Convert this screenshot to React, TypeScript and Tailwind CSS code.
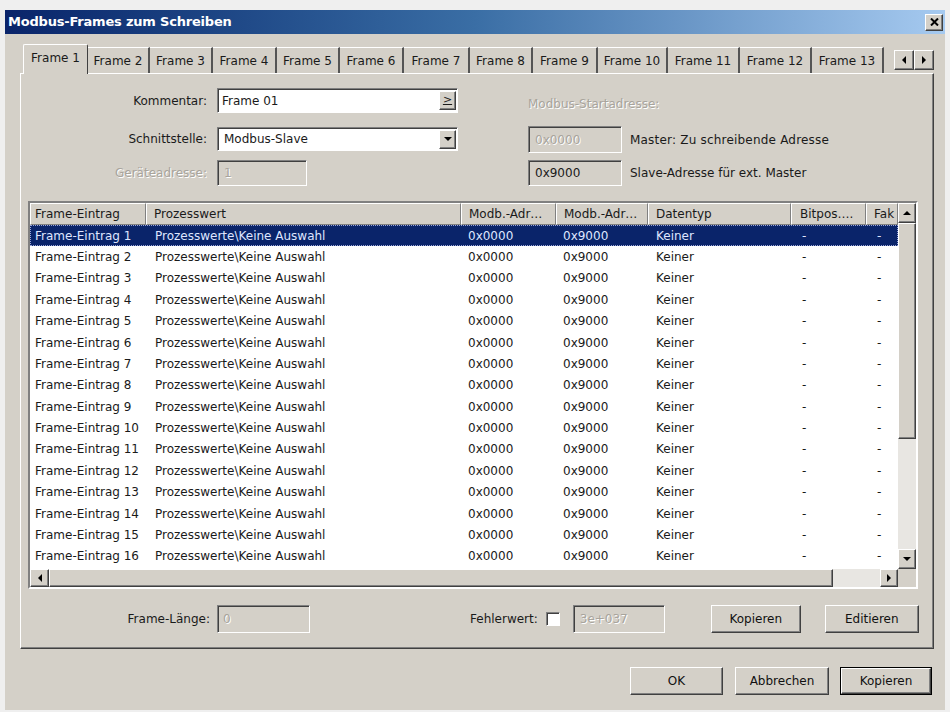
import React from "react";

const sunken =
  "border border-t-[#808080] border-l-[#808080] border-b-white border-r-white shadow-[inset_1px_1px_0_#404040]";
const raised =
  "border border-t-white border-l-white border-b-[#404040] border-r-[#404040] shadow-[inset_-1px_-1px_0_#808080]";
const disabledText = "text-[#a8a49c] [text-shadow:1px_1px_0_#ffffff]";

const tabs = [
  ["Frame 1", 65],
  ["Frame 2", 62],
  ["Frame 3", 63],
  ["Frame 4", 64],
  ["Frame 5", 63],
  ["Frame 6", 64],
  ["Frame 7", 66],
  ["Frame 8", 63],
  ["Frame 9", 65],
  ["Frame 10", 70],
  ["Frame 11", 72],
  ["Frame 12", 72],
  ["Frame 13", 72],
] as const;

const cols = [116, 315, 95, 92, 143, 75, 32];

function Tri({ dir }: { dir: "up" | "down" | "left" | "right" }) {
  const pts =
    dir === "up"
      ? "0,5 4,1 8,5"
      : dir === "down"
      ? "0,1 8,1 4,5"
      : dir === "left"
      ? "5,0 5,8 1,4"
      : "1,0 1,8 5,4";
  const w = dir === "up" || dir === "down" ? 8 : 6;
  const h = dir === "up" || dir === "down" ? 6 : 8;
  return (
    <svg width={w} height={h} viewBox={`0 0 ${w} ${h}`}>
      <polygon points={pts} fill="#000" />
    </svg>
  );
}

function ArrowBtn({ dir, className = "" }: { dir: "up" | "down" | "left" | "right"; className?: string }) {
  return (
    <div className={`${raised} bg-[#d4d0c8] flex items-center justify-center ${className}`}>
      <Tri dir={dir} />
    </div>
  );
}

function Button({ label, w, isDefault = false }: { label: string; w: number; isDefault?: boolean }) {
  const inner = (
    <div
      className={`${raised} bg-[#d4d0c8] h-full flex items-center justify-center text-[#111]`}
    >
      {label}
    </div>
  );
  return (
    <div style={{ width: w }} className={`h-[28px] ${isDefault ? "border border-black" : ""}`}>
      {inner}
    </div>
  );
}

export default function App() {
  const rows = Array.from({ length: 16 }, (_, i) => i + 1);
  return (
    <div className="w-[950px] h-[712px] bg-[#efefef] pt-[10px] pl-[5px] pr-[5px] pb-[2px] font-['DejaVu_Sans',sans-serif] text-[12px] text-[#1a1a1a] overflow-hidden">
      <div className="h-[700px] bg-[#d4d0c8] flex flex-col">
        {/* Title bar */}
        <div className="h-[24px] flex items-center justify-between pl-[3px] pr-[2px] bg-gradient-to-r from-[#0a246a] via-[#3a6ea5] to-[#a6caf0]">
          <span className="text-white font-bold text-[13px] tracking-[-0.2px]">Modbus-Frames zum Schreiben</span>
          <div className={`${raised} bg-[#d4d0c8] w-[18px] h-[17px] flex items-center justify-center`}>
            <svg width="9" height="8" viewBox="0 0 9 8">
              <path d="M1 0.5 L8 7.5 M8 0.5 L1 7.5" stroke="#000" strokeWidth="2" />
            </svg>
          </div>
        </div>

        <div className="pl-[15px] pr-[11px] pt-[10px] flex flex-col">
          {/* Tab row */}
          <div className="h-[29px] flex items-end relative z-10">
            <div className="flex items-end ml-[3px]">
              {tabs.map(([label, w], i) => {
                const active = i === 0;
                return (
                  <div
                    key={label}
                    style={{ width: w }}
                    className={
                      active
                        ? "h-[30px] -mb-[1px] bg-[#d4d0c8] border-l border-t border-l-white border-t-white border-r border-r-[#404040] rounded-t-[2px] flex items-center justify-center pb-[3px]"
                        : "h-[26px] border-t border-t-white border-r-2 border-r-[#555] flex items-center justify-center"
                    }
                  >
                    {label}
                  </div>
                );
              })}
            </div>
            <div className="ml-auto flex mb-[3px]">
              <ArrowBtn dir="left" className="w-[20px] h-[20px]" />
              <ArrowBtn dir="right" className="w-[20px] h-[20px]" />
            </div>
          </div>

          {/* Tab panel */}
          <div className="h-[576px] border border-t-white border-l-white border-b-[#404040] border-r-[#404040] shadow-[inset_-1px_-1px_0_#808080] flex flex-col">
            {/* Form area */}
            <div className="flex">
              <div className="w-[438px] flex flex-col">
                <div className="mt-[14px] flex items-center h-[25px]">
                  <div className="w-[186px] text-right">Kommentar:</div>
                  <div className={`ml-[10px] w-[241px] h-[25px] bg-white ${sunken} flex items-center justify-between pl-[4px] pr-[1px]`}>
                    <span>Frame 01</span>
                    <div className={`${raised} bg-[#d4d0c8] w-[17px] h-[19px] flex items-center justify-center text-[11px] underline`}>
                      &gt;
                    </div>
                  </div>
                </div>
                <div className="mt-[14px] flex items-center h-[24px]">
                  <div className="w-[186px] text-right">Schnittstelle:</div>
                  <div className={`ml-[10px] w-[241px] h-[24px] bg-white ${sunken} flex items-center justify-between pl-[6px] pr-[1px]`}>
                    <span>Modbus-Slave</span>
                    <ArrowBtn dir="down" className="w-[17px] h-[19px]" />
                  </div>
                </div>
                <div className="mt-[9px] flex items-center h-[26px]">
                  <div className={`w-[186px] text-right ${disabledText}`}>Geräteadresse:</div>
                  <div className={`ml-[10px] w-[90px] h-[26px] ${sunken} flex items-center pl-[6px] ${disabledText}`}>
                    1
                  </div>
                </div>
              </div>
              <div className="ml-[69px] flex flex-col">
                <div className={`mt-[23px] h-[14px] leading-[14px] ${disabledText}`}>Modbus-Startadresse:</div>
                <div className="mt-[15px] flex items-center">
                  <div className={`w-[94px] h-[27px] ${sunken} flex items-center pl-[6px] ${disabledText}`}>0x0000</div>
                  <span className="ml-[8px] tracking-[0.2px]">Master: Zu schreibende Adresse</span>
                </div>
                <div className="mt-[7px] flex items-center">
                  <div className={`w-[94px] h-[26px] ${sunken} flex items-center pl-[6px]`}>0x9000</div>
                  <span className="ml-[8px]">Slave-Adresse für ext. Master</span>
                </div>
              </div>
            </div>

            {/* Table */}
            <div className="mt-[15px] ml-[7px] w-[890px] h-[388px] border-2 border-t-[#808080] border-l-[#808080] border-b-white border-r-white bg-white flex flex-col">
              <div className="flex flex-1 min-h-0">
                <div className="flex flex-col w-[868px]">
                  {/* Header */}
                  <div className="flex h-[22px] bg-[#d4d0c8]">
                    {["Frame-Eintrag", "Prozesswert", "Modb.-Adr…", "Modb.-Adr…", "Datentyp", "Bitpos….", "Fak"].map((h, i) => (
                      <div
                        key={i}
                        style={{ width: cols[i] }}
                        className={`h-full border-t border-l border-t-white border-l-white border-r border-b border-r-[#808080] border-b-[#808080] flex items-center overflow-hidden whitespace-nowrap ${
                          i === 0 ? "pl-[4px]" : i === 5 ? "pl-[8px]" : "pl-[7px]"
                        }`}
                      >
                        {h}
                      </div>
                    ))}
                  </div>
                  {/* Rows */}
                  <div className="flex flex-col">
                    {rows.map((n) => {
                      const sel = n === 1;
                      return (
                        <div
                          key={n}
                          className={`flex h-[21.375px] items-center whitespace-nowrap ${
                            sel ? "bg-[#0a246a] text-[#dfe6ff] outline outline-1 outline-dotted outline-[#9aa6d8] -outline-offset-1" : ""
                          }`}
                        >
                          <div style={{ width: cols[0] }} className="pl-[5px]">Frame-Eintrag {n}</div>
                          <div style={{ width: cols[1] }} className="pl-[9px]">Prozesswerte\Keine Auswahl</div>
                          <div style={{ width: cols[2] }} className="pl-[7px]">0x0000</div>
                          <div style={{ width: cols[3] }} className="pl-[7px]">0x9000</div>
                          <div style={{ width: cols[4] }} className="pl-[8px]">Keiner</div>
                          <div style={{ width: cols[5] }} className="pl-[11px]">-</div>
                          <div style={{ width: cols[6] }} className="pl-[11px]">-</div>
                        </div>
                      );
                    })}
                  </div>
                </div>
                {/* Vertical scrollbar */}
                <div className="w-[18px] flex flex-col bg-[#e8e6e2]">
                  <ArrowBtn dir="up" className="h-[20px]" />
                  <div className={`${raised} bg-[#d4d0c8] h-[216px]`} />
                  <div className="flex-1" />
                  <ArrowBtn dir="down" className="h-[20px]" />
                </div>
              </div>
              {/* Horizontal scrollbar */}
              <div className="h-[18px] flex bg-[#d4d0c8]">
                <div className="w-[868px] flex bg-[#e8e6e2]">
                  <ArrowBtn dir="left" className="w-[19px] h-full" />
                  <div className={`${raised} bg-[#d4d0c8] w-[784px] h-full`} />
                  <div className="flex-1" />
                  <ArrowBtn dir="right" className="w-[18px] h-full" />
                </div>
                <div className="flex-1 bg-[#d4d0c8]" />
              </div>
            </div>

            {/* Bottom row in panel */}
            <div className="mt-[15px] flex items-center h-[29px]">
              <div className="w-[189px] text-right">Frame-Länge:</div>
              <div className={`ml-[7px] w-[93px] h-[28px] ${sunken} flex items-center pl-[5px] ${disabledText}`}>0</div>
              <div className="ml-[160px]">Fehlerwert:</div>
              <div className={`ml-[8px] w-[14px] h-[14px] bg-white ${sunken}`} />
              <div className={`ml-[13px] w-[92px] h-[28px] ${sunken} flex items-center pl-[6px] ${disabledText}`}>3e+037</div>
              <div className="ml-[46px]">
                <Button label="Kopieren" w={90} />
              </div>
              <div className="ml-[24px]">
                <Button label="Editieren" w={94} />
              </div>
            </div>
          </div>

          {/* Dialog buttons */}
          <div className="mt-[18px] flex justify-end pr-[2px]">
            <Button label="OK" w={93} />
            <div className="ml-[12px]">
              <Button label="Abbrechen" w={94} />
            </div>
            <div className="ml-[11px]">
              <Button label="Kopieren" w={92} isDefault />
            </div>
          </div>
        </div>
      </div>
    </div>
  );
}
